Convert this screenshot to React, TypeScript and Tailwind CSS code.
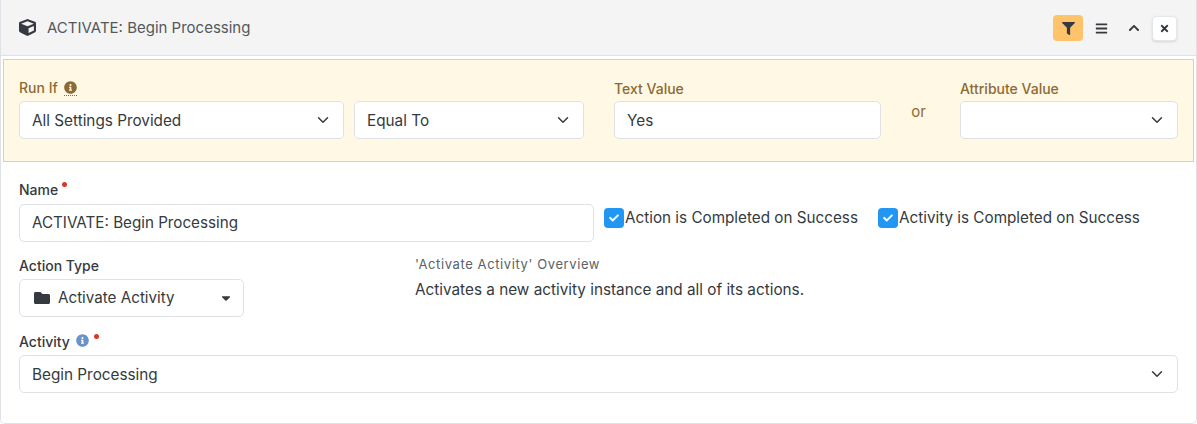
import React from "react";
import { FaCube, FaFilter, FaBars, FaChevronUp, FaTimes, FaFolder, FaInfoCircle, FaCheck, FaCaretDown } from "react-icons/fa";
import { ChevronDown } from "lucide-react";

const Chevron = () => <ChevronDown className="w-[18px] h-[18px] text-[#343a40]" strokeWidth={2} />;

function Select({ text, className }: { text: string; className: string }) {
  return (
    <div className={`h-[38px] flex items-center justify-between pl-[12px] pr-[11px] bg-white border border-[#dee2e6] rounded-[5px] text-[15.3px] text-[#343a40] ${className}`}>
      <span className="pt-[2px]">{text}</span>
      <Chevron />
    </div>
  );
}

function Check({ label }: { label: string }) {
  return (
    <div className="flex items-center h-[20px]">
      <span className="w-[20px] h-[20px] rounded-[4px] bg-[#2196f3] flex items-center justify-center">
        <FaCheck className="w-[10px] h-[10px] text-white" />
      </span>
      <span className="ml-[1px] text-[15.25px] text-[#343a40]">{label}</span>
    </div>
  );
}

export default function App() {
  return (
    <div className="w-[1197px] h-[424px] bg-white overflow-hidden" style={{ fontFamily: "Inter, sans-serif" }}>
      <div className="h-[424px] border border-t-0 border-[#dee2e6] rounded-b-[5px]">
        <div className="h-[56px] bg-[#f4f4f4] border-b border-[#dee2e6] flex items-center pl-[18px] pr-[19px]">
          <FaCube className="w-[17px] h-[17px] text-[#343a40]" />
          <span className="ml-[11px] pt-[1px] text-[15px] text-[#52585e]">ACTIVATE: Begin Processing</span>
          <div className="ml-auto flex items-center pt-[1px]">
            <span className="w-[30px] h-[26px] rounded-[4px] bg-[#ffc46b] flex items-center justify-center">
              <FaFilter className="w-[13px] h-[13px] text-[#343a40]" />
            </span>
            <span className="ml-[8px] w-[20px] flex justify-center"><FaBars className="w-[13px] h-[13px] text-[#343a40]" /></span>
            <span className="ml-[13px] w-[20px] flex justify-center"><FaChevronUp className="w-[12px] h-[12px] text-[#343a40]" /></span>
            <span className="ml-[8px] w-[25px] h-[25px] rounded-[4px] bg-white border border-[#e4e6e8] shadow-sm flex items-center justify-center">
              <FaTimes className="w-[11px] h-[11px] text-[#343a40]" />
            </span>
          </div>
        </div>

        <div className="mx-[2px] mt-[3px] h-[103px] bg-[#fff8e5] border border-[#fbcb85] flex items-start pl-[15px] pr-[15px] pt-[18px]">
          <div>
            <div className="h-[23px] flex items-center text-[14px] font-medium text-[#8d6a33] leading-none pb-[3px]">
              Run If
              <span className="ml-[6px] pb-[1px] border-b border-dotted border-[#8d6a33] flex">
                <FaInfoCircle className="w-[13px] h-[13px]" />
              </span>
            </div>
            <div className="flex gap-[10px]">
              <Select text="All Settings Provided" className="w-[325px]" />
              <Select text="Equal To" className="w-[230px]" />
            </div>
          </div>
          <div className="ml-[30px]">
            <div className="h-[23px] flex items-center text-[14px] font-medium text-[#8d6a33] pb-[3px]">Text Value</div>
            <div className="h-[38px] w-[267px] flex items-center pl-[12px] pt-[2px] bg-white border border-[#dee2e6] rounded-[5px] text-[15.3px] text-[#343a40]">Yes</div>
          </div>
          <div className="w-[79px] h-[61px] flex items-center justify-center pr-[4px] pt-[8px] text-[15px] text-[#8d6a33]">or</div>
          <div>
            <div className="h-[23px] flex items-center text-[14px] font-medium text-[#8d6a33] pb-[3px]">Attribute Value</div>
            <Select text="" className="w-[218px]" />
          </div>
        </div>

        <div className="pl-[18px] pr-[18px]">
          <div className="flex items-start mt-[16px]">
            <div>
              <div className="h-[26px] flex items-start pt-[1px] text-[14px] font-medium text-[#343a40]">
                Name<span className="ml-[4px] mt-[3px] w-[5px] h-[5px] rounded-full bg-[#d9372b]" />
              </div>
              <div className="h-[38px] w-[575px] flex items-center pl-[12px] pt-[1px] bg-white border border-[#dee2e6] rounded-[5px] text-[15.2px] text-[#343a40]">ACTIVATE: Begin Processing</div>
            </div>
            <div className="ml-[10px] mt-[30px] flex gap-[20px]">
              <Check label="Action is Completed on Success" />
              <Check label="Activity is Completed on Success" />
            </div>
          </div>

          <div className="flex items-start mt-[13px]">
            <div className="w-[396px]">
              <div className="h-[24px] text-[14px] font-medium text-[#343a40]">Action Type</div>
              <div className="h-[38px] w-[225px] flex items-center pl-[14px] pr-[11px] bg-white border border-[#dee2e6] rounded-[5px] text-[15.2px] text-[#343a40]">
                <FaFolder className="w-[16px] h-[16px]" />
                <span className="ml-[8px] pt-[1px]">Activate Activity</span>
                <FaCaretDown className="ml-auto w-[12px] h-[14px]" />
              </div>
            </div>
            <div>
              <div className="text-[13px] tracking-[0.6px] leading-[18px] text-[#5b6269]">'Activate Activity' Overview</div>
              <div className="mt-[7px] text-[15.3px] leading-[20px] text-[#343a40]">Activates a new activity instance and all of its actions.</div>
            </div>
          </div>

          <div className="mt-[13px]">
            <div className="h-[25px] flex items-start pt-[1px] text-[14px] font-medium text-[#343a40]">
              Activity
              <FaInfoCircle className="ml-[6px] mt-[3px] w-[13px] h-[13px] text-[#6a94c9]" />
              <span className="ml-[5px] mt-[3px] w-[5px] h-[5px] rounded-full bg-[#d9372b]" />
            </div>
            <Select text="Begin Processing" className="w-[1159px]" />
          </div>
        </div>
      </div>
    </div>
  );
}
